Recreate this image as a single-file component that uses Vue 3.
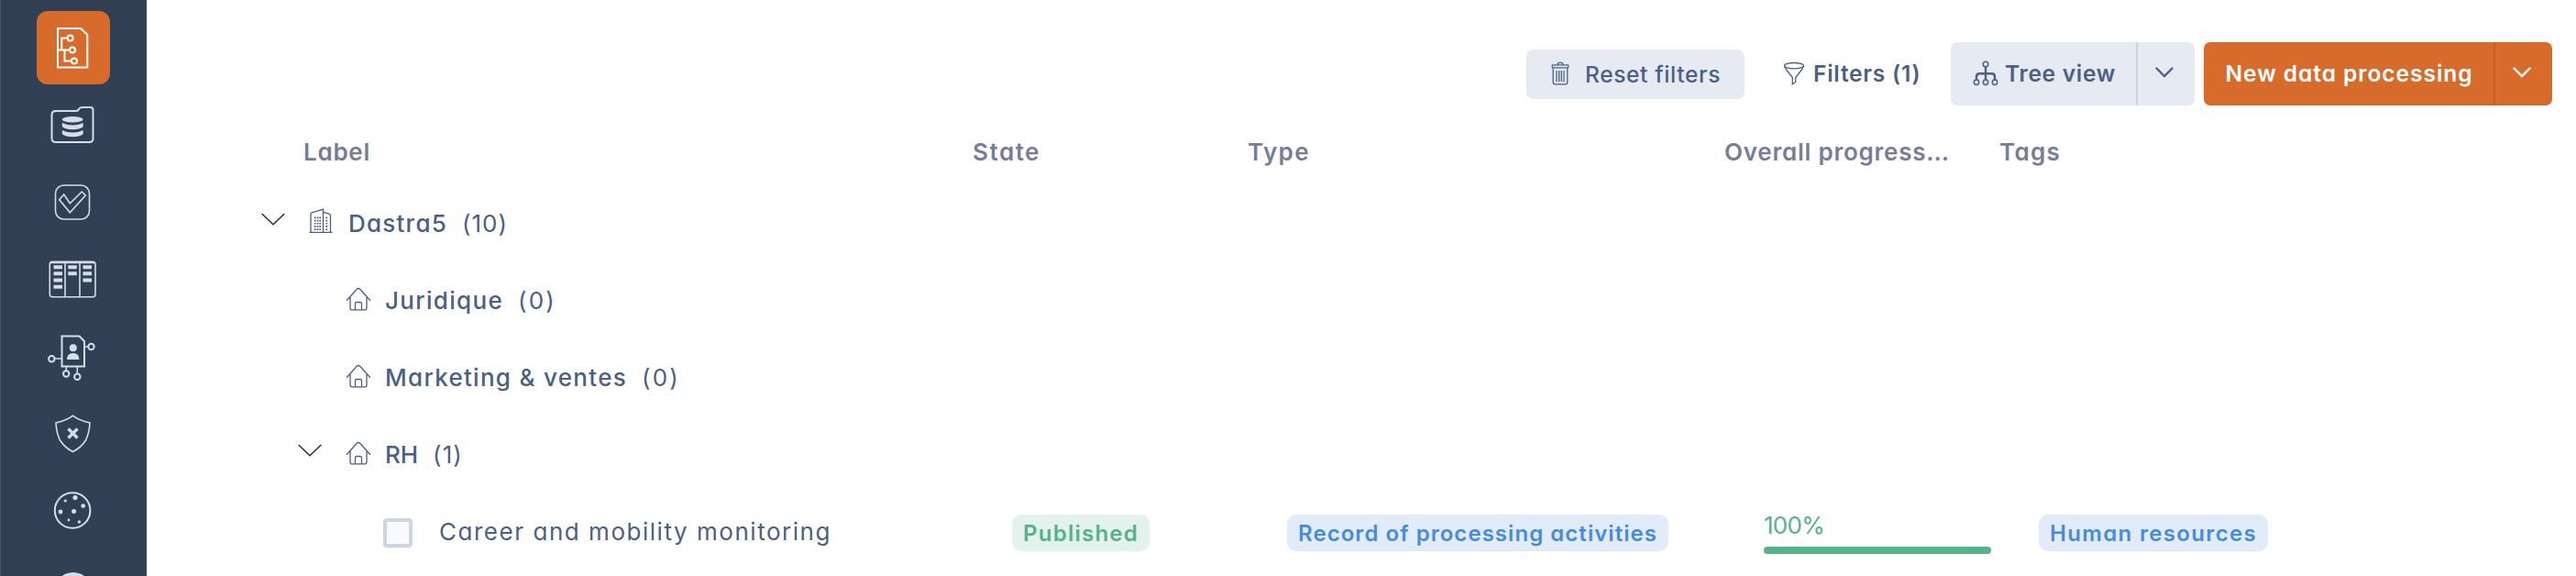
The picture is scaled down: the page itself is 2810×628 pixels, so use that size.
<script setup>
// Spreads the letters of a label over the given advance width.
const vFit = {
  mounted(el, { value }) {
    const natural = el.getBoundingClientRect().width
    el.style.letterSpacing = (value - natural) / el.textContent.length + 'px'
  }
}

const columns = [
  { label: 'Label', width: 73, cls: 'first' },
  { label: 'State', width: 74 },
  { label: 'Type', width: 68 },
  { label: 'Overall progress…', width: 246 },
  { label: 'Tags', width: 67 }
]

const groups = [
  { name: 'Dastra5', width: 108, count: '(10)', countWidth: 50, level: 0, open: true, icon: 'building' },
  { name: 'Juridique', width: 129, count: '(0)', countWidth: 42, level: 1, open: false, icon: 'house' },
  { name: 'Marketing & ventes', width: 264, count: '(0)', countWidth: 42, level: 1, open: false, icon: 'house' },
  { name: 'RH', width: 36, count: '(1)', countWidth: 33, level: 1, open: true, icon: 'house' }
]

const progress = 100
</script>

<template>
  <div class="app">
    <nav class="sidebar">
      <a class="item active">
        <svg viewBox="50 22 60 60">
          <path d="M63 31H88L95.3 37.7V73.5H63Z" />
          <path d="M64 54.5H76M67.3 54V41.5H73.5M70.5 54.5V66.5H78" />
          <circle cx="76.6" cy="41.6" r="3" /><circle cx="79" cy="54.5" r="3" /><circle cx="81" cy="66.5" r="3" />
        </svg>
      </a>
      <a class="item">
        <svg viewBox="50 106 60 60">
          <path d="M61 121H83Q85 121 86 119Q87 117 90 117H98.500Q101.500 117 101.500 120V151Q101.500 155 97.500 155H61Q56.500 155 56.500 151V125Q56.500 121 61 121Z" />
          <g class="solid">
            <ellipse cx="79.2" cy="130.300" rx="11.500" ry="3.200" />
            <path d="M67.800 134Q79.200 139 90.700 134V138Q87 141.300 79.200 141.300T67.800 138Z" />
            <path d="M67.800 142Q79.200 147 90.700 142V146Q87 149.200 79.200 149.200T67.800 146Z" />
          </g>
        </svg>
      </a>
      <a class="item">
        <svg class="thin" viewBox="50 190 60 60">
          <rect x="60.500" y="202" width="37" height="37" rx="9" />
          <path d="M69.700 212L76.300 221.700L89.300 209L93.300 213L76.300 231.700L64.700 217.700Z" />
        </svg>
      </a>
      <a class="item">
        <svg class="thin" viewBox="50 274 60 60">
          <rect x="54.300" y="285.200" width="49.700" height="38.600" rx="3" />
          <path d="M71 285V324M87 285V324M55 286.500H103" />
          <path class="bars" d="M58.500 291.300h9.500M58.500 298.300h9.500M58.500 305.500h9.500M58.500 312.700h9.500M74.300 291.300h9.500M74.300 298.300h9.500M90.500 291.300h9.500M90.500 298.300h9.500M90.500 305.500h9.500" />
        </svg>
      </a>
      <a class="item">
        <svg viewBox="50 358 60 60">
          <path d="M67.500 366.500H86.500L92 372V399.500H67.500Z" />
          <path class="fine" d="M92 378H96M60 391H67M72.300 400V404M84.300 400V407" />
          <circle cx="99.500" cy="378" r="3.200" /><circle cx="56.300" cy="391.200" r="3.200" />
          <circle cx="72.200" cy="407.500" r="3.200" /><circle cx="84.300" cy="410.800" r="3.200" />
          <g class="solid">
            <circle cx="79.800" cy="379.300" r="4" />
            <path d="M73 392Q73 385 79.700 385T86.300 392Z" />
          </g>
        </svg>
      </a>
      <a class="item">
        <svg class="thin" viewBox="50 442 60 60">
          <path d="M79.500 453.200Q73 458.500 61 461Q61.500 472 65.500 480Q70.500 488 79.500 492.500Q88.500 488 93.500 480Q97.500 472 98 461Q86 458.500 79.500 453.200Z" />
          <path class="cross" d="M74.500 467.500L84.500 477.500M84.500 467.500L74.500 477.500" />
        </svg>
      </a>
      <a class="item">
        <svg viewBox="50 526 60 60">
          <circle cx="79.100" cy="556.500" r="19.300" />
          <g class="solid">
            <circle cx="82" cy="542.500" r="2.600" /><circle cx="71.300" cy="546" r="1.600" />
            <circle cx="90.700" cy="551.600" r="2.400" /><circle cx="66" cy="558" r="2.400" />
            <circle cx="80.600" cy="557.500" r="2.500" /><circle cx="75" cy="567" r="1.400" />
            <circle cx="86.400" cy="569" r="1.700" />
          </g>
        </svg>
      </a>
      <a class="item">
        <svg viewBox="50 610 60 60"><circle class="solid" cx="79.800" cy="644" r="20" /></svg>
      </a>
    </nav>

    <main class="main">
      <header class="toolbar">
        <button class="reset">
          <svg class="trash" viewBox="0 0 20 26">
            <rect x="1.200" y="3.800" width="17.600" height="3" rx=".8" />
            <path d="M7 3.500Q7 1.200 10 1.200T13 3.500M2.200 7V22.500Q2.200 24.800 4.500 24.800H15.500Q17.800 24.800 17.800 22.500V7M6 10V22.300M8.700 10V22.300M11.300 10V22.300M14 10V22.300" />
          </svg>
          <span v-fit="148">Reset filters</span>
        </button>
        <button class="filters">
          <svg class="funnel" viewBox="0 0 24 26">
            <ellipse cx="12" cy="4.700" rx="10.500" ry="3.200" />
            <path d="M1.500 4.700Q2 7 4 9.500L10.300 17.500V24.800L13.700 22.500V17.500L20 9.500Q22 7 22.500 4.700" />
          </svg>
          <span v-fit="117">Filters (1)</span>
        </button>
        <div class="split tree">
          <button class="label">
            <svg class="hierarchy" viewBox="0 0 28 28">
              <circle cx="14" cy="4" r="2.800" />
              <path class="line" d="M14 7V21M4 21V17.500Q4 14.300 7.500 14.300H20.500Q24 14.300 24 17.500V21" />
              <circle cx="4" cy="23.700" r="2.700" /><circle cx="14" cy="23.700" r="2.700" /><circle cx="24" cy="23.700" r="2.700" />
            </svg>
            <span v-fit="121">Tree view</span>
          </button>
          <button class="caret"><svg viewBox="0 0 20 12"><path d="M1.500 1.500L10 10L18.500 1.500" /></svg></button>
        </div>
        <div class="split create">
          <button class="label"><span v-fit="270">New data processing</span></button>
          <button class="caret"><svg viewBox="0 0 20 12"><path d="M1.500 1.500L10 10L18.500 1.500" /></svg></button>
        </div>
      </header>

      <div class="row head">
        <div v-for="c in columns" :key="c.label" :class="c.cls"><span v-fit="c.width">{{ c.label }}</span></div>
      </div>

      <div v-for="g in groups" :key="g.name" class="group" :class="'level' + g.level">
        <span class="toggle">
          <svg v-if="g.open" viewBox="0 0 26 14"><path d="M.7 1L13 12.800L25.300 1" /></svg>
        </span>
        <svg v-if="g.icon === 'building'" class="building" viewBox="0 0 26 28">
          <path d="M.5 26.400H25.500M2 26V6.500Q2 5.300 3.200 4.900L15.500 1.200V26M15.500 4.300L22 6.200Q23.500 6.700 23.500 8V26" />
          <path class="windows" d="M6.700 9.500V24M9.500 9.500V24M12.200 9.500V24M19.300 9.500V24" />
        </svg>
        <svg v-else class="house" viewBox="0 0 28 26">
          <path d="M1 14.800L12.300 2.300Q14 .7 15.700 2.300L27 14.800M5 11V22.500Q5 24.800 7 24.800H21Q23 24.800 23 22.500V11M10.500 24.500V18Q10.500 16.500 12 16.500H15.500Q17.500 16.500 17.500 18V24.500" />
        </svg>
        <span v-fit="g.width" class="name">{{ g.name }}</span>
        <span v-fit="g.countWidth" class="count">{{ g.count }}</span>
      </div>

      <div class="row record">
        <div class="title">
          <i class="checkbox"></i>
          <span v-fit="428">Career and mobility monitoring</span>
        </div>
        <div><span class="badge green"><b v-fit="126">Published</b></span></div>
        <div><span class="badge blue"><b v-fit="392">Record of processing activities</b></span></div>
        <div class="progress">
          <span v-fit="66">{{ progress }}%</span>
          <div class="track"><div class="bar" :style="{ width: progress + '%' }"></div></div>
        </div>
        <div><span class="badge blue"><b v-fit="226">Human resources</b></span></div>
      </div>
    </main>
  </div>
</template>

<style>
body {
  background: #fff;
  overflow: hidden;
}
</style>

<style scoped>
.app {
  display: flex;
  width: 2810px;
  height: 628px;
  overflow: hidden;
  background: #fff;
  color: #4b6084;
  font-family: Inter, "Liberation Sans", sans-serif;
  font-feature-settings: "cv11" 1;
  font-size: 26px;
  white-space: nowrap;
}
svg {
  display: block;
  flex: none;
  fill: none;
  stroke: currentColor;
  stroke-width: 1.3;
}
span, b {
  display: inline-block;
}
button {
  display: flex;
  align-items: center;
  box-sizing: border-box;
  padding: 0;
  border: 0;
  background: none;
  color: inherit;
  font: inherit;
  font-feature-settings: inherit;
}

.sidebar {
  flex: none;
  box-sizing: border-box;
  width: 160px;
  height: 628px;
  padding-top: 10px;
  overflow: hidden;
  background: #324056;
  box-shadow: inset 1px 0 #46546a;
  color: #d5dde8;
}
.item {
  display: flex;
  align-items: center;
  justify-content: center;
  width: 80px;
  height: 80px;
  margin: 2px auto 4px;
  border-radius: 12px;
}
.item.active {
  background: #d76b2b;
  color: #fff;
}
.item svg {
  width: 60px;
  height: 60px;
  stroke-width: 2;
}
.item svg.thin {
  stroke-width: 1.6;
}
.item .solid {
  fill: currentColor;
  stroke: none;
}
.item .bars {
  stroke-width: 4;
}
.item .fine {
  stroke-width: 1.6;
}
.item .cross {
  stroke-width: 3.2;
}

.main {
  flex: 1;
}
.toolbar {
  display: flex;
  align-items: center;
  justify-content: flex-end;
  box-sizing: border-box;
  height: 129px;
  padding: 32px 26px 0 0;
  font-size: 24.500px;
}
.reset {
  width: 238px;
  height: 54px;
  padding-left: 27px;
  border-radius: 8px;
  background: #e5eaf3;
  font-weight: 500;
}
.trash {
  width: 20px;
  height: 26px;
  margin: -2px 17px 0 0;
}
.filters {
  width: 225px;
  height: 69px;
  padding: 0 0 2px 42px;
  font-weight: 600;
}
.funnel {
  width: 24px;
  height: 26px;
  margin-right: 9px;
}
.split {
  display: flex;
  height: 69px;
  border-radius: 7px;
  font-weight: 600;
}
.split .label {
  padding-bottom: 2px;
}
.split .caret {
  justify-content: center;
  padding: 0 4px 4px 0;
  border-left: 2px solid #ced3dd;
}
.caret svg {
  width: 20px;
  height: 12px;
  stroke-width: 2.4;
  stroke-linecap: round;
}
.tree {
  margin-right: 10px;
  background: #e5eaf3;
}
.tree .label {
  width: 202px;
  padding-left: 24px;
}
.tree .caret {
  width: 64px;
}
.hierarchy {
  width: 28px;
  height: 28px;
  margin-right: 7px;
  stroke-width: 1.5;
}
.hierarchy .line {
  stroke-width: 2.4;
}
.create {
  background: #d76b2b;
  color: #fff;
}
.create .label {
  width: 316px;
  padding-left: 23.500px;
}
.create .caret {
  width: 64px;
  border-left-color: #c06027;
}

.row {
  display: grid;
  grid-template-columns: 901px 300px 520px 300px 1fr;
  align-items: center;
}
.head {
  height: 72px;
  color: #777d99;
  font-weight: 600;
}
.head .first {
  padding-left: 171px;
}

.group {
  display: flex;
  align-items: center;
  height: 84px;
  padding-left: 126px;
}
.group.level1 {
  padding-left: 166px;
}
.toggle {
  width: 51px;
  color: #2b2d33;
}
.toggle svg {
  width: 26px;
  height: 14px;
  margin: -8px 0 0 -1px;
  stroke-width: 1.5;
}
.building {
  width: 26px;
  height: 28px;
  margin: -4px 17px 0 0;
}
.building .windows {
  stroke-width: 1.8;
  stroke-dasharray: 1.700 1.500;
}
.house {
  width: 28px;
  height: 26px;
  margin: -2px 15px 0 0;
}
.name {
  margin-right: 16px;
  font-weight: 500;
}

.record {
  height: 84px;
}
.record > div:not(.title) {
  padding-left: 43px;
}
.title {
  display: flex;
  align-items: center;
  padding-left: 258px;
}
.checkbox {
  box-sizing: border-box;
  width: 32px;
  height: 32px;
  margin: 4px 29px 0 0;
  border: 4px solid #cdd7e3;
  border-radius: 4px;
  background: #faf9ff;
}
.badge {
  display: inline-flex;
  align-items: center;
  height: 40px;
  margin-top: 4px;
  padding: 0 12px;
  border-radius: 10px;
  font-size: 24px;
  vertical-align: top;
}
.badge b {
  font-weight: 600;
}
.badge.green {
  background: #e3f2ec;
  color: #57b189;
}
.badge.blue {
  background: #e2ebf8;
  color: #468be0;
}
.progress {
  padding-top: 4px;
  color: #57b189;
  line-height: 30px;
}
.progress > span {
  display: block;
  width: max-content;
}
.track {
  width: 248px;
  height: 8px;
  margin-top: 8px;
  border-radius: 4px;
  background: #e3f2ec;
}
.bar {
  height: 8px;
  border-radius: 4px;
  background: #57b189;
}
</style>
